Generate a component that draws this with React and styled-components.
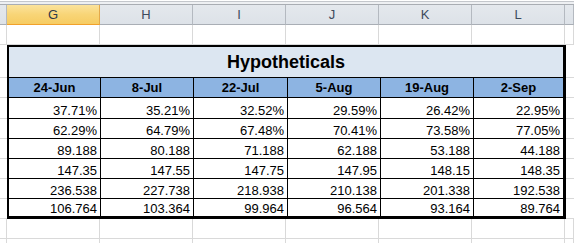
import React from 'react';
import styled, { createGlobalStyle } from 'styled-components';

const Global = createGlobalStyle`
  html, body {
    margin: 0;
    padding: 0;
    background: #ffffff;
  }
  body {
    font-family: 'Liberation Sans', Arial, sans-serif;
  }
`;

const colunas = ['G', 'H', 'I', 'J', 'K', 'L'];
const larguras = [92, 93, 94, 93, 93, 89];
const datas = ['24-Jun', '8-Jul', '22-Jul', '5-Aug', '19-Aug', '2-Sep'];

const linhas = [
  ['37.71%', '35.21%', '32.52%', '29.59%', '26.42%', '22.95%'],
  ['62.29%', '64.79%', '67.48%', '70.41%', '73.58%', '77.05%'],
  ['89.188', '80.188', '71.188', '62.188', '53.188', '44.188'],
  ['147.35', '147.55', '147.75', '147.95', '148.15', '148.35'],
  ['236.538', '227.738', '218.938', '210.138', '201.338', '192.538'],
  ['106.764', '103.364', '99.964', '96.564', '93.164', '89.764'],
];

// alturas das linhas da planilha ao lado da tabela (bordas incluidas)
const alturasBorda = [33, 20, 21, 20, 20, 20, 20, 20];

const Planilha = styled.div`
  width: 574px;
  height: 243px;
  overflow: hidden;
  background: #ffffff;
`;

const FaixaTopo = styled.div`
  height: 5px;
  background: #eef0f3;
  border-top: 1px solid #ffffff;
  border-bottom: 1px solid #a9adb3;
  box-sizing: border-box;
  position: relative;
  &::before {
    content: '';
    display: block;
    height: 1px;
    background: #c4c7cc;
  }
`;

const Cabecalho = styled.div`
  display: flex;
  height: 20px;
`;

const Letra = styled.div`
  flex: 0 0 ${p => p.$w}px;
  box-sizing: border-box;
  height: 20px;
  display: flex;
  align-items: center;
  justify-content: center;
  font-size: 13px;
  color: ${p => (p.$ativo ? '#2e3a4a' : '#3d4a5c')};
  background: ${p =>
    p.$ativo
      ? 'linear-gradient(#fbe39c, #f8d577 50%, #f6cc63)'
      : 'linear-gradient(#e4e8ed, #dde2e8)'};
  border-right: 1px solid ${p => (p.$ativo ? '#e4a94a' : '#b4b9c0')};
  border-bottom: 1px solid ${p => (p.$ativo ? '#f1a12b' : '#a9aeb5')};
  &:last-child {
    flex: 1;
  }
`;

const LinhaVazia = styled.div`
  display: flex;
  height: 20px;
`;

const CelulaVazia = styled.div`
  flex: 0 0 ${p => p.$w}px;
  box-sizing: border-box;
  border-right: 1px solid #d9d9d9;
  border-bottom: 1px solid #d9d9d9;
  &:last-child {
    flex: 1;
  }
`;

const Faixa = styled.div`
  display: flex;
`;

const Margem = styled.div`
  display: flex;
  flex-direction: column;
  flex: ${p => (p.$fixo ? `0 0 ${p.$fixo}px` : '1')};
`;

const CelulaMargem = styled.div`
  height: ${p => p.$h}px;
  box-sizing: border-box;
  border-bottom: 1px solid #d9d9d9;
`;

const Tabela = styled.div`
  flex: 0 0 559px;
  box-sizing: border-box;
  border-top: 2px solid #000;
  border-left: 2px solid #000;
  border-right: 3px solid #000;
  border-bottom: 3px solid #000;
  display: grid;
  grid-template-columns: ${larguras.map(l => `${l}px`).join(' ')};
  grid-template-rows: 31px 20px 21px 20px 20px 20px 20px 17px;
  font-size: 13px;
  color: #000;
`;

const Titulo = styled.div`
  grid-column: 1 / -1;
  background: #dce6f1;
  border-bottom: 1px solid #000;
  display: flex;
  align-items: center;
  justify-content: center;
  font-size: 18px;
  font-weight: bold;
  padding-top: 1px;
`;

const Data = styled.div`
  background: #8db4e2;
  border-bottom: 1px solid #000;
  border-right: 1px solid #000;
  display: flex;
  align-items: center;
  justify-content: center;
  font-weight: bold;
  &:nth-child(7) {
    border-right: none;
  }
`;

const Valor = styled.div`
  background: #ffffff;
  border-right: ${p => (p.$ultimaColuna ? 'none' : '1px solid #000')};
  border-bottom: ${p => (p.$ultimaLinha ? 'none' : '1px solid #000')};
  display: flex;
  align-items: flex-end;
  justify-content: flex-end;
  line-height: 13px;
  padding-right: 3px;
  padding-bottom: 1px;
`;

const App = () => (
  <Planilha>
    <Global />
    <FaixaTopo />
    <Cabecalho>
      <Letra $w={7} />
      {colunas.map((c, i) => (
        <Letra key={c} $w={i === 0 ? 93 : 93} $ativo={c === 'G'}>
          {c}
        </Letra>
      ))}
      <Letra $w={8} />
    </Cabecalho>
    <LinhaVazia>
      <CelulaVazia $w={7} />
      {colunas.map(c => (
        <CelulaVazia key={c} $w={93} />
      ))}
      <CelulaVazia $w={8} />
    </LinhaVazia>
    <Faixa>
      <Margem $fixo={7}>
        {alturasBorda.map((h, i) => (
          <CelulaMargem key={i} $h={h} />
        ))}
      </Margem>
      <Tabela>
        <Titulo>Hypotheticals</Titulo>
        {datas.map(d => (
          <Data key={d}>{d}</Data>
        ))}
        {linhas.map((linha, r) =>
          linha.map((v, c) => (
            <Valor
              key={`${r}-${c}`}
              $ultimaColuna={c === linha.length - 1}
              $ultimaLinha={r === linhas.length - 1}
            >
              {v}
            </Valor>
          ))
        )}
      </Tabela>
      <Margem>
        {alturasBorda.map((h, i) => (
          <CelulaMargem key={i} $h={h} />
        ))}
      </Margem>
    </Faixa>
    <LinhaVazia>
      <CelulaVazia $w={7} />
      {colunas.map(c => (
        <CelulaVazia key={c} $w={93} />
      ))}
      <CelulaVazia $w={8} />
    </LinhaVazia>
    <LinhaVazia>
      <CelulaVazia $w={7} />
      {colunas.map(c => (
        <CelulaVazia key={c} $w={93} />
      ))}
      <CelulaVazia $w={8} />
    </LinhaVazia>
  </Planilha>
);

export default App;
